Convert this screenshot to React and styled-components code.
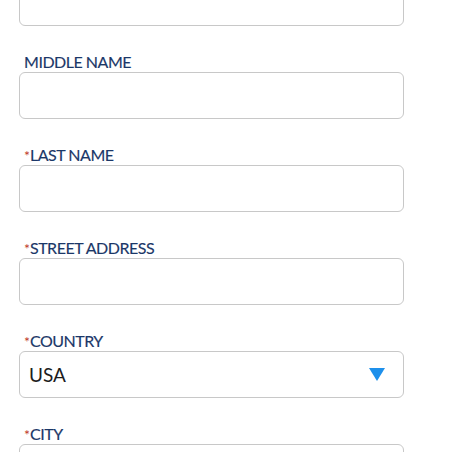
import React from "react";
import styled, { createGlobalStyle } from "styled-components";

const Global = createGlobalStyle`
  html, body { margin: 0; padding: 0; background: #ffffff; }
  body { font-family: Lato, "Open Sans", sans-serif; overflow: hidden; }
`;

const Form = styled.form`
  display: flex;
  flex-direction: column;
  gap: 26px;
  width: 385px;
  margin: -41px 0 0 19px;
`;

const Field = styled.div`
  display: flex;
  flex-direction: column;
`;

const Label = styled.label`
  display: block;
  height: 20px;
  font-family: Lato, sans-serif;
  font-size: 16px;
  line-height: 20px;
  color: #1b3768;
  padding-left: 5px;
  letter-spacing: -0.48px;
  white-space: nowrap;
  -webkit-text-stroke: 0.15px #1b3768;
`;

const Req = styled.span`
  color: #c0392b;
  font-size: 14px;
  line-height: 0;
  letter-spacing: 0;
  -webkit-text-stroke: 0;
`;

const Box = styled.div`
  box-sizing: border-box;
  height: 47px;
  border: 1px solid #c8c8c8;
  border-radius: 6px;
  background: #fff;
  display: flex;
  align-items: center;
  justify-content: space-between;
  padding: 0 18px 0 9px;
`;

const Value = styled.span`
  font-family: Lato, sans-serif;
  font-size: 19px;
  color: #1d1d1d;
`;

const Caret = () => (
  <svg width="16" height="13" viewBox="0 0 16 13">
    <polygon points="0,0 16,0 8,13" fill="#1e90eb" />
  </svg>
);

const fields = [
  { label: "FIRST NAME", req: true },
  { label: "MIDDLE NAME", req: false },
  { label: "LAST NAME", req: true },
  { label: "STREET ADDRESS", req: true },
  { label: "COUNTRY", req: true, value: "USA", select: true },
  { label: "CITY", req: true },
];

export default function App() {
  return (
    <>
      <Global />
      <Form>
        {fields.map((f) => (
          <Field key={f.label}>
            <Label>
              {f.req && <Req>*</Req>}
              {f.label}
            </Label>
            <Box>
              {f.value && <Value>{f.value}</Value>}
              {f.select && <Caret />}
            </Box>
          </Field>
        ))}
      </Form>
    </>
  );
}
